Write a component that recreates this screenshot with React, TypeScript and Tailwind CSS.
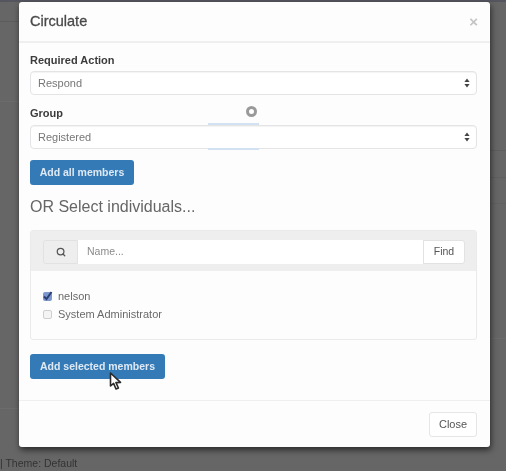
import { Search } from "lucide-react"

function SelectBox({ value }: { value: string }) {
  return (
    <div className="flex h-[24px] items-center justify-between rounded-[4px] border border-[#e4e4e6] bg-white pl-[7px] pr-[6px] text-[11px] text-[#777] shadow-[inset_0_1px_1px_rgba(0,0,0,0.05)]">
      <span>{value}</span>
      <svg width="6" height="10" viewBox="0 0 6 10" className="text-[#444]">
        <path d="M3 0.5 L5.6 4 H0.4 Z M3 9.5 L5.6 6 H0.4 Z" fill="currentColor" />
      </svg>
    </div>
  )
}

export default function App() {
  return (
    <div className="relative flex h-[471px] w-[506px] flex-col overflow-hidden bg-[#666666] font-['Liberation_Sans',sans-serif]">
      {/* faint table lines of the page behind the modal */}
      <div className="absolute left-0 top-[21px] h-px w-[19px] bg-[#5c5c5c]" />
      <div className="absolute left-0 top-[101px] h-px w-[19px] bg-[#6c6c6c]" />
      <div className="absolute left-0 top-[408px] h-px w-[19px] bg-[#6c6c6c]" />
      <div className="absolute right-0 top-[150px] h-px w-[16px] bg-[#5e5e5e]" />
      <div className="absolute right-0 top-[177px] h-px w-[16px] bg-[#606060]" />
      <div className="absolute right-0 top-[203px] h-px w-[16px] bg-[#616161]" />
      <div className="absolute right-0 top-[338px] h-px w-[16px] bg-[#6b6b6b]" />

      <div className="h-[2px] shrink-0 bg-[#55555f]" />
      <div className="ml-[19px] flex h-[445px] w-[471px] shrink-0 flex-col rounded-[3px] bg-[#fdfdfd] shadow-[1px_3px_6px_rgba(0,0,0,0.6)] blur-[0.7px]">
        <div className="flex h-[41px] shrink-0 items-center justify-between border-b-2 border-[#efefef] pl-[11px] pr-[12px]">
          <h4 className="text-[14.5px] font-medium text-[#4a4a4a] [-webkit-text-stroke:0.3px_#4a4a4a]">Circulate</h4>
          <span className="text-[15px] font-bold leading-none text-[#c4c4c4]">×</span>
        </div>

        <div className="flex flex-1 flex-col pl-[11px] pr-[13px]">
          <label className="mt-[11px] text-[11px] font-bold leading-[12px] text-[#3c3c3c]">Required Action</label>
          <div className="mt-[5px]">
            <SelectBox value="Respond" />
          </div>
          <label className="mt-[12px] text-[11px] font-bold leading-[12px] text-[#3c3c3c]">Group</label>
          <div className="mt-[6px]">
            <SelectBox value="Registered" />
          </div>
          <button className="mt-[11px] flex h-[25px] w-[104px] items-center justify-center rounded-[3px] bg-[#337ab7] text-[10.5px] font-bold text-[#dfe9f3]">
            Add all members
          </button>
          <h3 className="mt-[12px] text-[16px] leading-[20px] text-[#666]">OR Select individuals...</h3>

          <div className="mt-[13px] h-[110px] rounded-[3px] border border-[#eaeaea]">
            <div className="flex h-[40px] items-center bg-[#eeeeee] pl-[12px] pr-[11px] pt-[1px]">
              <div className="flex h-[24px] w-full">
                <div className="flex w-[35px] items-center justify-center rounded-l-[3px] border border-[#e2e2e2] bg-[#eeeeee]">
                  <Search size={10} strokeWidth={3} className="text-[#555]" />
                </div>
                <div className="flex flex-1 items-center bg-white pl-[9px] text-[10.5px] text-[#8a8a8a]">Name...</div>
                <div className="flex w-[42px] items-center justify-center rounded-r-[3px] border border-[#e2e2e2] bg-white text-[10.5px] text-[#555]">
                  Find
                </div>
              </div>
            </div>
            <div className="flex flex-col gap-[6px] pl-[12px] pt-[19px] text-[11px] leading-[12px] text-[#6a6a6a]">
              <div className="flex items-center gap-[6px]">
                <span className="flex h-[9px] w-[9px] items-center justify-center rounded-[2px] bg-[#7d98cf]">
                  <svg width="11" height="11" viewBox="0 0 11 11" className="overflow-visible">
                    <path d="M2 5.5 L4.5 8 L9.5 1" fill="none" stroke="#2b3f73" strokeWidth="2" />
                  </svg>
                </span>
                <span>nelson</span>
              </div>
              <div className="flex items-center gap-[6px]">
                <span className="h-[9px] w-[9px] rounded-[2px] border border-[#cfcfcf] bg-[#f4f4f4]" />
                <span>System Administrator</span>
              </div>
            </div>
          </div>

          <button className="mt-[14px] flex h-[25px] w-[135px] items-center justify-center rounded-[3px] bg-[#337ab7] text-[10.5px] font-bold text-[#dfe9f3]">
            Add selected members
          </button>
        </div>

        <div className="flex h-[47px] shrink-0 items-center justify-end border-t border-[#efefef] pr-[13px]">
          <button className="flex h-[25px] w-[48px] items-center justify-center rounded-[3px] border border-[#e6e6e6] bg-white text-[11px] text-[#555]">
            Close
          </button>
        </div>
      </div>
      <div className="pt-[10px] text-[10.5px] leading-[12px] text-[#333] blur-[0.7px]">| Theme: Default</div>

      {/* page spinner showing through the modal */}
      <div className="absolute left-[208px] top-[123px] h-[27px] w-[51px] border-y-2 border-[#d3e2f2] blur-[0.7px]" />
      <div className="absolute left-[246px] top-[106px] h-[11px] w-[11px] rounded-full border-[3px] border-[#9a9a9a] bg-white blur-[0.7px]" />
      <svg width="14" height="20" viewBox="0 0 14 20" className="absolute left-[109px] top-[372px] blur-[0.4px]">
        <path d="M1.5 1 L1.5 14 L4.6 11.4 L7 17 L9.4 16 L7 10.6 L11.5 10.4 Z" fill="#fff" stroke="#2a2a2a" strokeWidth="1.6" strokeLinejoin="round" />
      </svg>
    </div>
  )
}
